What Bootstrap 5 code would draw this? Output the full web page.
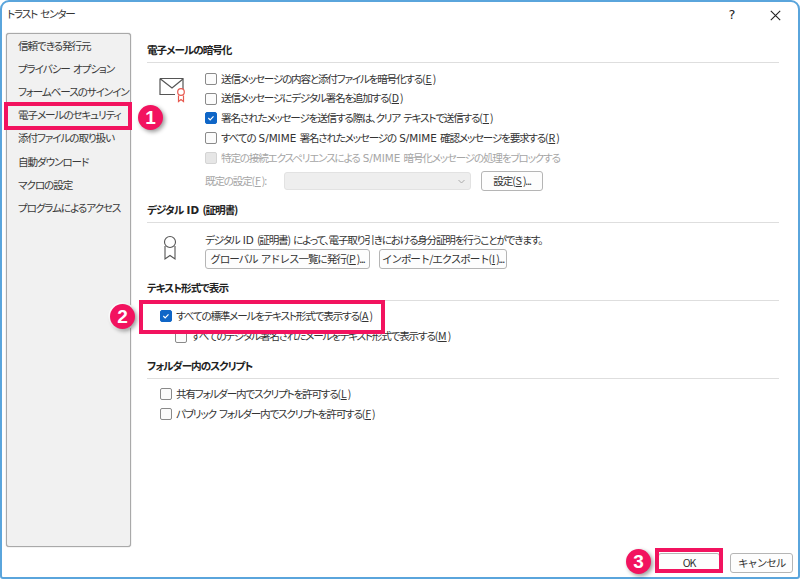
<!DOCTYPE html>
<html lang="ja"><head><meta charset="utf-8"><title>トラスト センター</title>
<link rel="stylesheet" href="https://cdn.jsdelivr.net/npm/bootstrap@5.3.0/dist/css/bootstrap.min.css">
<style>
html,body{margin:0;height:579px;overflow:hidden;background:#fff}
body{font-family:"Noto Sans CJK JP","Noto Sans",sans-serif;font-size:10.6px;letter-spacing:-1.2px;word-spacing:2px;color:#333;font-feature-settings:"palt";line-height:1.2}
.lat{font-family:"DejaVu Sans",sans-serif;font-size:10.4px;letter-spacing:0}
.win{position:relative;width:800px;height:579px;border:2px solid #5aa5dc;border-radius:9px 9px 3px 3px;background:#fff}
.ttl{height:31px;padding:6px 0 0 5px;color:#333;align-items:flex-start}
.helpx{width:40px;text-align:center;font-size:13px;line-height:1;color:#222;font-family:"DejaVu Sans",sans-serif;letter-spacing:0}
.bodyrow{height:514px}
.side{width:125px;margin-left:4px;background:#f1f1f1;border:1px solid #a9a9a9;border-radius:3px;box-shadow:0 0 1px #888;flex:none;padding-top:.5px}
.sitem{height:23.2px;padding-left:11px;display:flex;align-items:center;color:#3a3a3a;white-space:nowrap;letter-spacing:-1.1px}
.mainp{padding:9px 0 0 16px;width:647px;flex:none}
.hd{font-weight:700;color:#222;height:19px;padding-top:2px;letter-spacing:-1px}
.rule{height:1px;background:#dedede;margin:1px 0 0 0;width:632px}
.rw{height:19.8px;display:flex;align-items:center;gap:4px;white-space:nowrap}
.cb{width:12px;height:12px;border:1px solid #8a8a8a;border-radius:2px;background:#fbfbfb;flex:none;display:block}
.cb.on{background:#0f66c7;border-color:#0f66c7}
.cb.off{background:#e6e6e6;border-color:#d4d4d4}
.dis{color:#a6a6a6}
.ubtn{background:#fdfdfd;border:1px solid #b5b5b5;border-radius:3px;height:20px;padding:0 4px;display:inline-flex;align-items:center;justify-content:center;font-size:10.6px;letter-spacing:-1.15px;word-spacing:2px;color:#333;white-space:nowrap;line-height:1}
.sel{width:187px;height:18px;background:#eeeeee;border:1px solid #e2e2e2;border-radius:3px;position:relative}
u{text-underline-offset:1px;letter-spacing:0;margin:0 1px}
.pinkbox{position:absolute;border:4px solid #f2135f;pointer-events:none}
.numc{position:absolute;width:25px;height:25px;border-radius:50%;background:#f2135f;color:#fff;font:700 19px/25px "Liberation Sans",sans-serif;letter-spacing:0;text-align:center;box-shadow:2px 2px 4px rgba(0,0,0,.4),0 0 0 1.5px #fff}
.gi{width:58px;flex:none}
.ftr{position:absolute;right:5px;bottom:4px;display:flex;gap:10px}
</style></head><body>
<div class="win">
  <div class="ttl d-flex justify-content-between">
    <span>トラスト センター</span>
    <span class="d-flex"><span class="helpx">?</span><span class="helpx" style="width:46px">
      <svg width="11" height="11" viewBox="0 0 11 11"><path d="M.8.8l9.4 9.4M10.2.8L.8 10.2" stroke="#222" stroke-width="1.1" fill="none"/></svg></span></span>
  </div>
  <div class="bodyrow d-flex">
    <div class="side">
      <div class="sitem">信頼できる発行元</div>
      <div class="sitem">プライバシー オプション</div>
      <div class="sitem">フォームベースのサインイン</div>
      <div class="sitem">電子メールのセキュリティ</div>
      <div class="sitem">添付ファイルの取り扱い</div>
      <div class="sitem">自動ダウンロード</div>
      <div class="sitem">マクロの設定</div>
      <div class="sitem">プログラムによるアクセス</div>
    </div>
    <div class="mainp">
      <div class="hd">電子メールの暗号化</div>
      <div class="rule"></div>
      <div class="d-flex" style="margin-top:6px">
        <div class="gi">
          <svg width="30" height="30" viewBox="0 0 30 30" class="d-block" style="margin:6px 0 0 12px"><path d="M1 3.500h23v11.500" fill="none" stroke="#555" stroke-width="1.2"/><path d="M1 3.500v16h15M1.500 4l11.500 9 11-9" fill="none" stroke="#555" stroke-width="1.2"/><circle cx="22" cy="17" r="3.300" fill="#fff" stroke="#e8594f" stroke-width="1.200"/><path d="M19.500 20.500v6l2.500-2 2.500 2v-6" fill="none" stroke="#e8594f" stroke-width="1.200"/></svg>
        </div>
        <div>
          <div class="rw"><span class="cb"></span><span>送信メッセージの内容と添付ファイルを暗号化する(<u>E</u>)</span></div>
          <div class="rw"><span class="cb"></span><span>送信メッセージにデジタル署名を追加する(<u>D</u>)</span></div>
          <div class="rw"><svg class="cb on" viewBox="0 0 12 12"><path d="M2.800 6l2.200 2.200 4-4.200" fill="none" stroke="#fff" stroke-width="1.400"/></svg><span>署名されたメッセージを送信する際は、クリア テキストで送信する(<u>T</u>)</span></div>
          <div class="rw"><span class="cb"></span><span>すべての <span class="lat">S/MIME</span> 署名されたメッセージの <span class="lat">S/MIME</span> 確認メッセージを要求する(<u>R</u>)</span></div>
          <div class="rw dis"><span class="cb off"></span><span>特定の接続エクスペリエンスによる <span class="lat">S/MIME</span> 暗号化メッセージの処理をブロックする</span></div>
          <div class="d-flex align-items-center" style="height:25px;margin-top:1px">
            <span class="dis" style="width:79px">既定の設定(<u>F</u>):</span>
            <span class="sel d-block"><svg width="7" height="5" viewBox="0 0 7 5" class="position-absolute" style="right:5px;top:6px"><path d="M.5 1l3 3 3-3" fill="none" stroke="#aaa"/></svg></span>
            <button class="ubtn" style="width:62px;margin-left:10px">設定(<u>S</u>)...</button>
          </div>
        </div>
      </div>
      <div class="hd" style="margin-top:8px">デジタル <span class="lat fw-bold">ID</span> (証明書)</div>
      <div class="rule"></div>
      <div class="d-flex" style="margin-top:11px">
        <div class="gi">
          <svg width="16" height="28" viewBox="0 0 16 28" class="d-block" style="margin:0 0 0 15px"><circle cx="8" cy="8" r="5.500" fill="none" stroke="#555" stroke-width="1.100"/><path d="M3 12v13l5-3.500 5 3.500V12" fill="none" stroke="#555" stroke-width="1.100"/></svg>
        </div>
        <div>
          <div style="height:15px;white-space:nowrap">デジタル <span class="lat">ID</span> (証明書) によって、電子取り引きにおける身分証明を行うことができます。</div>
          <div class="d-flex" style="gap:9px">
            <button class="ubtn" style="width:165px">グローバル アドレス一覧に発行(<u>P</u>)...</button>
            <button class="ubtn" style="width:128px">インポート/エクスポート(<u>I</u>)...</button>
          </div>
        </div>
      </div>
      <div class="hd" style="margin-top:11px">テキスト形式で表示</div>
      <div class="rule"></div>
      <div class="rw" style="padding-left:13px;margin-top:5px"><svg class="cb on" viewBox="0 0 12 12"><path d="M2.800 6l2.200 2.200 4-4.200" fill="none" stroke="#fff" stroke-width="1.400"/></svg><span>すべての標準メールをテキスト形式で表示する(<u>A</u>)</span></div>
      <div class="rw" style="padding-left:28px;margin-top:1px"><span class="cb"></span><span>すべてのデジタル署名されたメールをテキスト形式で表示する(<u>M</u>)</span></div>
      <div class="hd" style="margin-top:11px">フォルダー内のスクリプト</div>
      <div class="rule"></div>
      <div style="margin-top:6px;padding-left:13px">
        <div class="rw"><span class="cb"></span><span>共有フォルダー内でスクリプトを許可する(<u>L</u>)</span></div>
        <div class="rw"><span class="cb"></span><span>パブリック フォルダー内でスクリプトを許可する(<u>F</u>)</span></div>
      </div>
    </div>
  </div>
  <div class="ftr">
    <button class="ubtn" style="width:62px">OK</button>
    <button class="ubtn" style="width:63px">キャンセル</button>
  </div>
  <div class="pinkbox" style="left:2px;top:100px;width:128px;height:28px"></div>
  <div class="pinkbox" style="left:137px;top:298px;width:246px;height:34px"></div>
  <div class="pinkbox" style="left:653px;top:546px;width:68px;height:25px"></div>
  <div class="numc" style="left:136px;top:103px">1</div>
  <div class="numc" style="left:108px;top:302px">2</div>
  <div class="numc" style="left:624px;top:547px">3</div>
</div>
</body></html>
